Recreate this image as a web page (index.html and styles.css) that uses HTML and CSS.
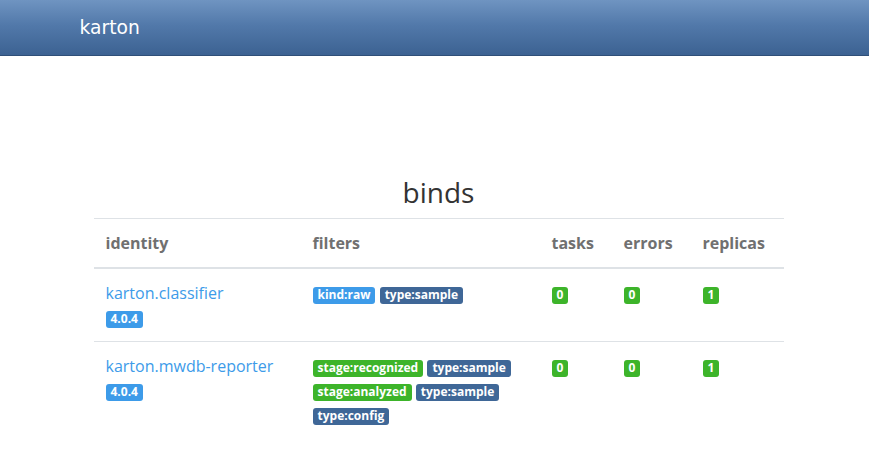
FILE: index.html
```html
<!DOCTYPE html>
<html>
<head>
<meta charset="utf-8">
<title>karton</title>
<link rel="stylesheet" href="styles.css">
</head>
<body>
<nav class="navbar">
  <div class="nav-inner"><a class="brand" href="#">karton</a></div>
</nav>
<main class="container">
  <h2 class="title">binds</h2>
  <table class="binds">
    <thead>
      <tr>
        <th class="c-id">identity</th>
        <th class="c-f">filters</th>
        <th class="c-t">tasks</th>
        <th class="c-e">errors</th>
        <th class="c-r">replicas</th>
      </tr>
    </thead>
    <tbody>
      <tr>
        <td><a class="ident" href="#">karton.classifier</a><div class="ver"><span class="badge b-blue">4.0.4</span></div></td>
        <td><div class="filt"><span class="badge b-blue">kind:raw</span> <span class="badge b-dark">type:sample</span></div></td>
        <td><span class="badge b-green">0</span></td>
        <td><span class="badge b-green">0</span></td>
        <td><span class="badge b-green">1</span></td>
      </tr>
      <tr>
        <td><a class="ident" href="#">karton.mwdb-reporter</a><div class="ver"><span class="badge b-blue">4.0.4</span></div></td>
        <td>
          <div class="filt"><span class="badge b-green">stage:recognized</span> <span class="badge b-dark">type:sample</span></div>
          <div class="filt"><span class="badge b-green">stage:analyzed</span> <span class="badge b-dark">type:sample</span></div>
          <div class="filt"><span class="badge b-dark">type:config</span></div>
        </td>
        <td><span class="badge b-green">0</span></td>
        <td><span class="badge b-green">0</span></td>
        <td><span class="badge b-green">1</span></td>
      </tr>
    </tbody>
  </table>
</main>
</body>
</html>
```

FILE: styles.css
```css
* { box-sizing: border-box; }
html, body { margin: 0; padding: 0; }
body {
  font-family: "Open Sans", "Noto Sans", sans-serif;
  font-size: 16px;
  line-height: 1.5;
  color: #212529;
  background: #fff;
}
.navbar {
  height: 56px;
  background: linear-gradient(to bottom, #6f94c1 0%, #5279aa 45%, #3c6292 100%);
  border-bottom: 1px solid #2f4f78;
}
.nav-inner {
  width: 750px;
  margin: 0 auto;
  padding: 0 20px;
  display: flex;
  align-items: center;
  height: 55px;
}
.brand {
  font-family: "DejaVu Sans", sans-serif;
  font-size: 18.7px;
  color: #fff;
  text-decoration: none;
  padding-top: 1px;
}
.container {
  width: 690px;
  margin: 0 auto;
  position: relative;
  left: 4px;
}
.title {
  margin: 120px 0 8px;
  font-size: 28px;
  font-weight: 400;
  line-height: 1.2;
  text-align: center;
  color: #333;
}
.binds {
  width: 690px;
  border-collapse: collapse;
  table-layout: fixed;
}
.binds th, .binds td {
  padding: 12px;
  text-align: left;
  vertical-align: top;
  border-top: 1px solid #dee2e6;
}
.binds th {
  font-weight: 700;
  color: #707070;
  border-bottom: 2px solid #dee2e6;
  vertical-align: bottom;
}
.binds tbody tr:first-child td { border-top: 0; }
.c-id { width: 207px; }
.c-f { width: 239px; }
.c-t { width: 72px; }
.c-e { width: 79px; }
.c-r { width: 93px; }
.ident {
  color: #3d9be9;
  text-decoration: none;
}
.ver { line-height: 24px; }
.filt { line-height: 24px; }
.badge {
  display: inline-block;
  font-size: 12px;
  font-weight: 700;
  line-height: 1;
  padding: 2px 5px 3px;
  border-radius: 3px;
  color: #fff;
  vertical-align: baseline;
  white-space: nowrap;
}
.b-blue { background: #3d9be9; }
.b-dark { background: #3f6797; }
.b-green { background: #3db42a; }
```
